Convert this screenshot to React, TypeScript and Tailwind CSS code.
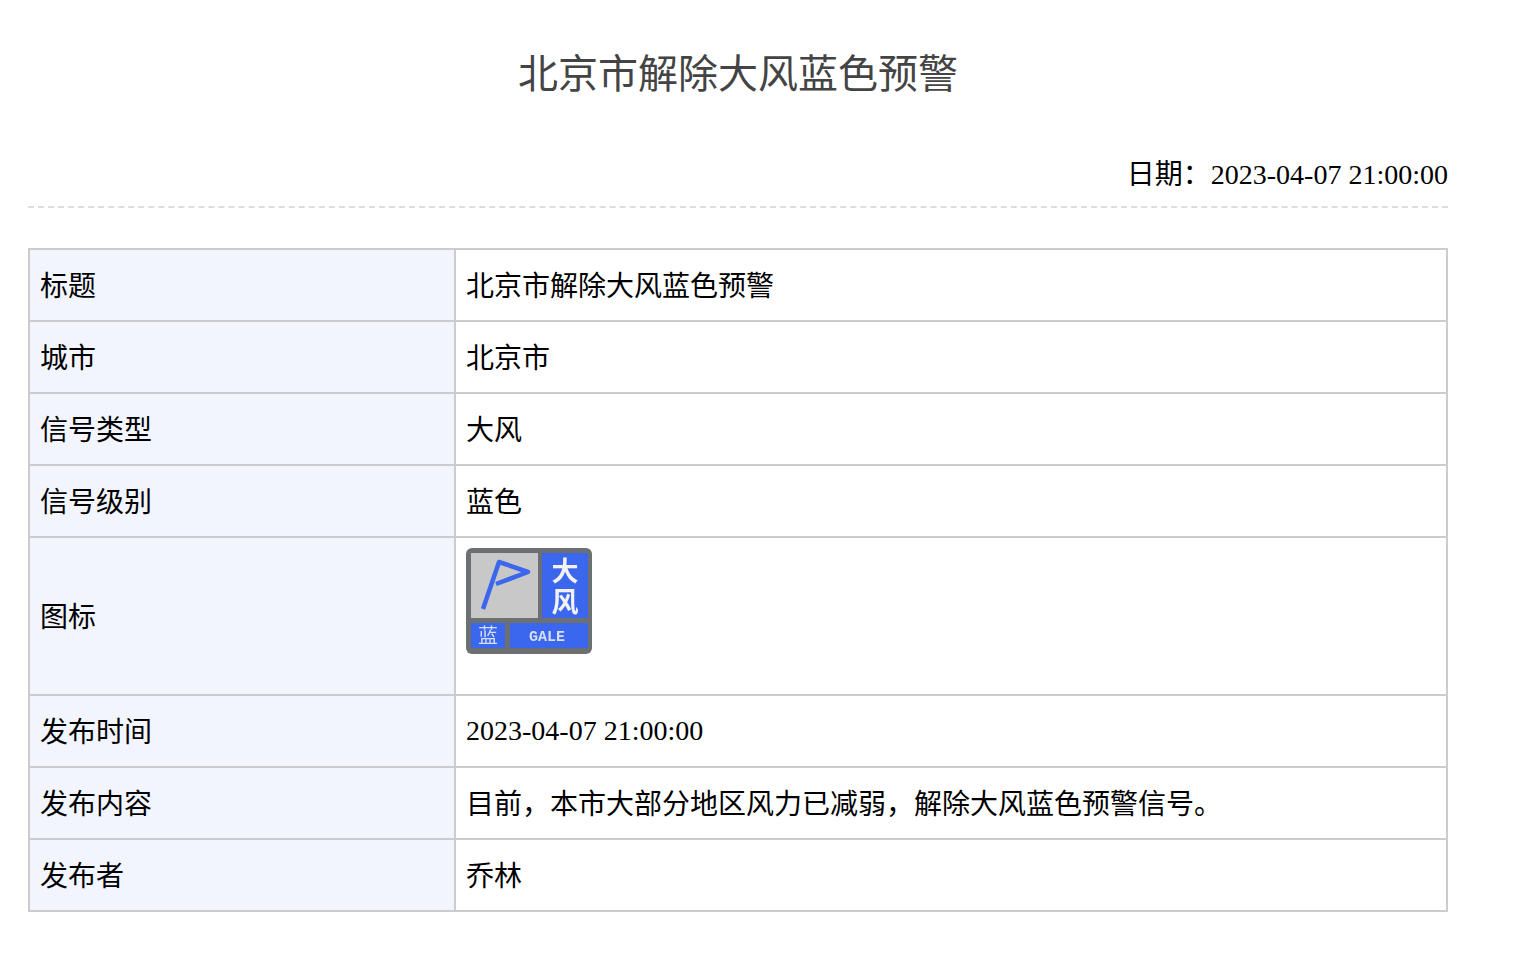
import type { ReactNode } from 'react'

const serifFont = 'font-["Liberation_Serif","Noto_Sans_CJK_SC",serif]'

function GaleIcon() {
  return (
    <svg width="126" height="106" viewBox="0 0 126 106" className="block">
      <defs>
        <filter id="soft" x="-5%" y="-5%" width="110%" height="110%">
          <feGaussianBlur stdDeviation="0.65" />
        </filter>
      </defs>
      <g filter="url(#soft)">
        <rect x="0" y="0" width="126" height="106" rx="6" fill="#6c6f73" />
        <rect x="5" y="5" width="67" height="65" fill="#c8c8c8" />
        <rect x="76" y="5" width="46" height="65" fill="#3b66ee" />
        <rect x="5" y="75" width="34" height="25" fill="#3b66ee" />
        <rect x="44" y="75" width="78" height="25" fill="#3b66ee" />
        <path d="M17 61 L33 14 L62 24 L30 36" fill="none" stroke="#3b66ee" strokeWidth="4.5" strokeLinejoin="round" />
        <g fill="#f2f2f2" fontFamily="Noto Sans CJK SC, sans-serif" fontWeight="700" textAnchor="middle">
          <text x="99" y="33" fontSize="27">大</text>
          <text x="99" y="64" fontSize="27">风</text>
          <text x="22" y="95" fontSize="20" fill="#d5dcf5" fontWeight="400">蓝</text>
          <text x="81" y="93" fontSize="15" fontWeight="700" fontFamily="Liberation Mono, monospace" fill="#d8def5">GALE</text>
        </g>
      </g>
    </svg>
  )
}

const rows: { label: string; value: ReactNode; tall?: boolean; latin?: boolean }[] = [
  { label: '标题', value: '北京市解除大风蓝色预警' },
  { label: '城市', value: '北京市' },
  { label: '信号类型', value: '大风' },
  { label: '信号级别', value: '蓝色' },
  { label: '图标', value: <GaleIcon />, tall: true },
  { label: '发布时间', value: '2023-04-07 21:00:00', latin: true },
  { label: '发布内容', value: '目前，本市大部分地区风力已减弱，解除大风蓝色预警信号。' },
  { label: '发布者', value: '乔林' },
]

export default function App() {
  return (
    <div className={`min-h-[962px] bg-white pl-[28px] pt-[48px] text-black ${serifFont}`}>
      <div className="w-[1420px]">
        <h1 className="h-[54px] text-center text-[40px] leading-[54px] font-normal text-[#444]">
          北京市解除大风蓝色预警
        </h1>
        <div className="mt-[54px] border-b-2 border-dashed border-[#ddd] pb-[12px] text-right text-[28px] leading-[38px]">
          日期：2023-04-07 21:00:00
        </div>
        <table className="mt-[40px] w-full table-fixed border-collapse border-2 border-[#ccc] text-[28px] leading-[38px]">
          <colgroup>
            <col className="w-[426px]" />
            <col />
          </colgroup>
          <tbody>
            {rows.map((row) => (
              <tr key={row.label} className={row.tall ? 'h-[158px]' : 'h-[72px]'}>
                <td className="border-2 border-[#ccc] bg-[#f2f5fd] px-[10px] pt-[4px] align-middle">{row.label}</td>
                <td
                  className={`border-2 border-[#ccc] px-[10px] ${
                    row.tall ? 'pt-[10px] pb-[40px] align-top' : row.latin ? 'align-middle' : 'pt-[4px] align-middle'
                  }`}
                >
                  {row.value}
                </td>
              </tr>
            ))}
          </tbody>
        </table>
      </div>
    </div>
  )
}
